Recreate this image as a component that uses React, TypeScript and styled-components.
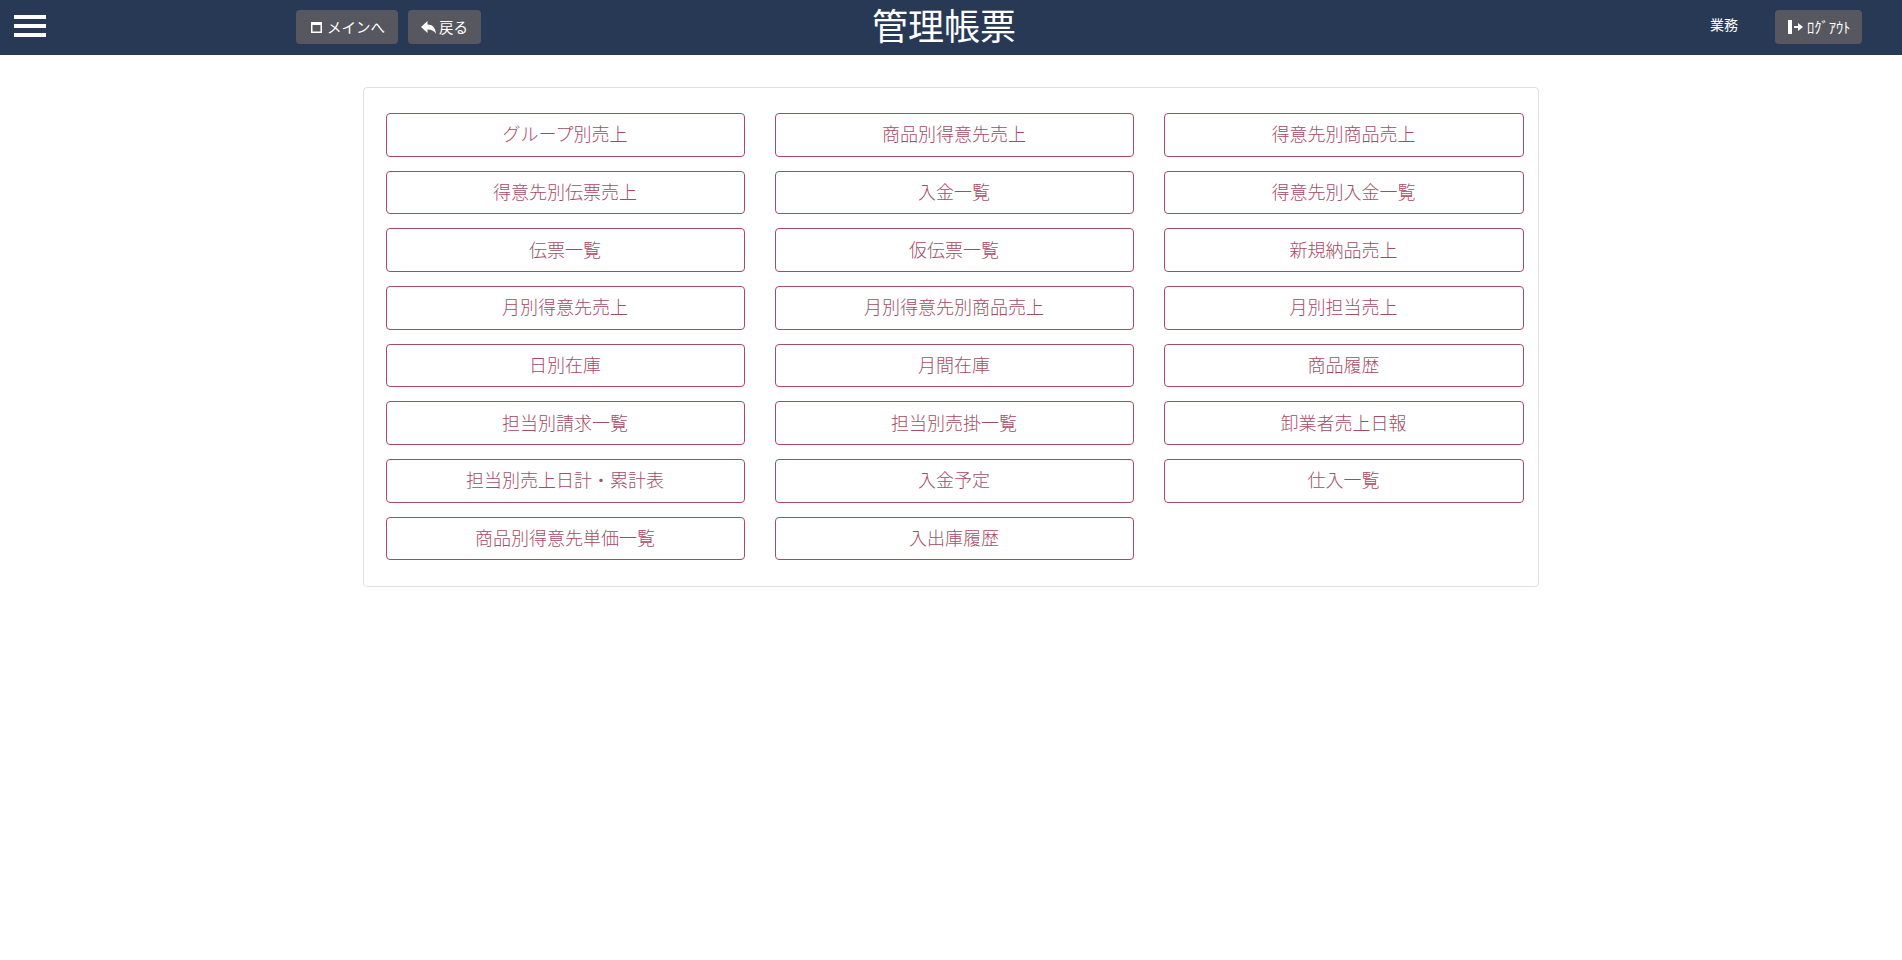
import React from "react";
import styled, { createGlobalStyle } from "styled-components";

const Global = createGlobalStyle`
  html, body { margin: 0; padding: 0; background: #fff; }
  body { font-family: "Liberation Sans", "Noto Sans CJK JP", sans-serif; }
  * { box-sizing: border-box; }
`;

const Header = styled.header`
  height: 55px;
  background: #283955;
  display: grid;
  grid-template-columns: 296px 576px auto 1fr;
  color: #fff;
`;
const Burger = styled.div`
  display: flex;
  flex-direction: column;
  gap: 5px;
  padding: 15px 0 0 14px;
`;
const BurgerBar = styled.span`
  display: block;
  width: 32px;
  height: 4px;
  background: #fff;
`;
const NavGroup = styled.div`
  display: flex;
  gap: 10px;
  padding-top: 10px;
`;
const DarkButton = styled.button<{ $left: number; $gap: number; $width: number }>`
  width: ${(p) => p.$width}px;
  height: 34px;
  padding: 0 0 2px ${(p) => p.$left}px;
  display: inline-flex;
  align-items: center;
  gap: ${(p) => p.$gap}px;
  border: 0;
  border-radius: 4px;
  background: #57585f;
  color: #fff;
  font: 14.5px "Liberation Sans", "Noto Sans CJK JP", sans-serif;
  svg { margin-top: 2px; flex: none; }
`;
const Title = styled.h1`
  margin: 0;
  font: 400 36px/56px "Liberation Sans", "Noto Sans CJK JP", sans-serif;
`;
const RightGroup = styled.div`
  display: flex;
  justify-content: flex-end;
  padding: 10px 40px 0 0;
  gap: 37px;
`;
const Role = styled.span`
  font-size: 14px;
  line-height: 31px;
`;
const Panel = styled.main`
  margin: 32px auto 0;
  width: 1176px;
  height: 500px;
  border: 1px solid #e0e0e0;
  border-radius: 4px;
  padding: 25px 0 0 22px;
  display: grid;
  grid-template-columns: 359px 359px 360px;
  grid-auto-rows: 43.5px;
  column-gap: 30px;
  row-gap: 14.2px;
  align-content: start;
`;
const ReportButton = styled.button`
  border: 1px solid #a84c64;
  border-radius: 4px;
  background: #fff;
  color: #a84a63;
  font: 300 18px "Liberation Sans", "Noto Sans CJK JP", sans-serif;
  padding: 0 1px 3px 0;
`;

const items = [
  "グループ別売上", "商品別得意先売上", "得意先別商品売上",
  "得意先別伝票売上", "入金一覧", "得意先別入金一覧",
  "伝票一覧", "仮伝票一覧", "新規納品売上",
  "月別得意先売上", "月別得意先別商品売上", "月別担当売上",
  "日別在庫", "月間在庫", "商品履歴",
  "担当別請求一覧", "担当別売掛一覧", "卸業者売上日報",
  "担当別売上日計・累計表", "入金予定", "仕入一覧",
  "商品別得意先単価一覧", "入出庫履歴",
];

const WindowIcon = () => (
  <svg width="11" height="11" viewBox="0 0 11 11">
    <path fill="#fff" fillRule="evenodd" d="M0 0h11v11H0zM1.500 3v6.500h8V3z" />
  </svg>
);
const BackIcon = () => (
  <svg width="15" height="13" viewBox="0 0 15 13">
    <path fill="#fff" d="M0 6l6.500-6v3.500c5 0 8 3 8.500 9.500-1.500-3-4-4.500-8.500-4.500V12z" />
  </svg>
);
const LogoutIcon = () => (
  <svg width="15" height="14" viewBox="0 0 15 14">
    <path fill="#fff" d="M0 0h4v14H0zM6 6h4V3l5 4-5 4V8H6z" />
  </svg>
);

export default function App() {
  return (
    <>
      <Global />
      <Header>
        <Burger>
          <BurgerBar />
          <BurgerBar />
          <BurgerBar />
        </Burger>
        <NavGroup>
          <DarkButton $left={15} $gap={5} $width={102}><WindowIcon />メインへ</DarkButton>
          <DarkButton $left={13} $gap={3} $width={73}><BackIcon />戻る</DarkButton>
        </NavGroup>
        <Title>管理帳票</Title>
        <RightGroup>
          <Role>業務</Role>
          <DarkButton $left={13} $gap={4} $width={87}><LogoutIcon />ﾛｸﾞｱｳﾄ</DarkButton>
        </RightGroup>
      </Header>
      <Panel>
        {items.map((t) => (
          <ReportButton key={t}>{t}</ReportButton>
        ))}
      </Panel>
    </>
  );
}
